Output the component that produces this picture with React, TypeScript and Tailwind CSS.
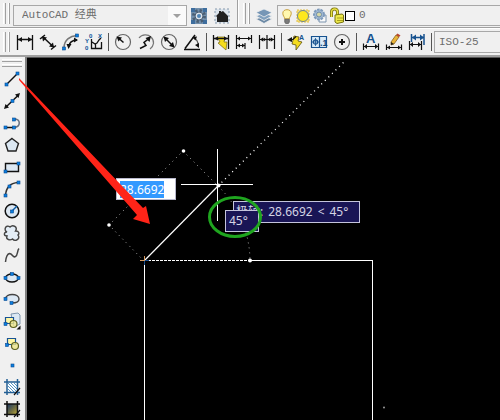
import React, { useEffect, useRef } from 'react';

interface Tool {
  label: string;
  icon: React.ReactNode;
}

interface IconProps {
  children: React.ReactNode;
}

const Icon: React.FC<IconProps> = ({ children }) => (
  <svg className="w-[18px] h-[18px] shrink-0 overflow-visible" viewBox="0 0 18 18" fill="none" stroke="#111" strokeWidth="1.2">
    {children}
  </svg>
);

// Blue grip square used on most draw icons
const Grip: React.FC<{ x: number; y: number }> = ({ x, y }) => (
  <rect x={x - 1.5} y={y - 1.5} width="3" height="3" fill="#0a7fe0" stroke="#0a4a90" strokeWidth=".6" />
);

const dimGroups: Tool[][] = [
  [
    {
      label: '线性',
      icon: <Icon><path d="M1.500 2v15M16.500 2v15M2 6.500h14" strokeWidth="1.300" /><path d="M2 6.500l4-2.500v5zM16 6.500l-4-2.500v5z" fill="#111" stroke="none" /></Icon>,
    },
    {
      label: '对齐',
      icon: <Icon><path d="M1 6l5-4M12 16.500l5-4M4 4l10.500 10" strokeWidth="1.500" /><path d="M3 3.500l5 1-4 4zM15 14.500l-5-1 4-4z" fill="#111" stroke="none" /></Icon>,
    },
    {
      label: '弧长',
      icon: (
        <Icon>
          <path d="M2 15C2 7 8 3 15 2.500" stroke="#777" strokeWidth="1.500" /><path d="M7 13c0-3 3-6 8-6" strokeWidth="1.500" />
          <path d="M6.500 16l-2-5h5zM16 7l-4-2.500v5z" fill="#111" stroke="none" /><Grip x={2} y={15.500} /><Grip x={15} y={2.500} />
        </Icon>
      ),
    },
    {
      label: '坐标',
      icon: (
        <Icon>
          <path d="M6.500 6v9.500h10V9M7 9l3 2 2-1 2-3 2-2M10.500 11v4" strokeWidth="1.300" />
          <g fill="#0b4f96" stroke="none" fontFamily="Liberation Sans, sans-serif" fontSize="6" fontWeight="bold">
            <text x="0" y="10">Y</text><text x="4" y="5">0</text><text x="13" y="5">X</text><text x="0" y="17">0</text>
          </g>
        </Icon>
      ),
    },
  ],
  [
    {
      label: '半径',
      icon: <Icon><circle cx="9" cy="9" r="7.500" stroke="#666" /><path d="M9.500 9.500L5 5.500" strokeWidth="1.500" /><path d="M2.500 3.500l5.500 1-3.500 4z" fill="#111" stroke="none" /></Icon>,
    },
    {
      label: '折弯',
      icon: <Icon><path d="M2 5c3-4 9-4 12-1 4 4 3 9-1 12" stroke="#777" /><path d="M3 15.500l6-3-2-3 5-4" strokeWidth="1.500" /><path d="M14 3l-1.500 6-4-4z" fill="#111" stroke="none" /></Icon>,
    },
    {
      label: '直径',
      icon: <Icon><circle cx="9" cy="9" r="7.500" stroke="#666" /><path d="M5 5l8 8" strokeWidth="1.500" /><path d="M3.500 3.500l5.500 1.500-4 4zM14.500 14.500L9 13l4-4z" fill="#111" stroke="none" /></Icon>,
    },
    {
      label: '角度',
      icon: <Icon><path d="M1 16.500h16M2 15.500L12 2" strokeWidth="1.500" /><path d="M11 5c3 1 4 4 4.500 8" stroke="#555" /><path d="M9 4l5-.5-1.500 4zM16 15l-4-3 4-2z" fill="#111" stroke="none" /></Icon>,
    },
  ],
  [
    {
      label: '快速标注',
      icon: <Icon><path d="M5 4h8l-1 5h3l-1 8-8-7 2-1z" fill="#f5dc1e" stroke="#746514" strokeWidth=".7" /><path d="M1.500 2v14M16.500 2v14M2 5.500h14" strokeWidth="1.300" /><path d="M2 5.500l4-2v4zM16 5.500l-4-2v4z" fill="#111" stroke="none" /></Icon>,
    },
    {
      label: '基线',
      icon: <Icon><path d="M1.500 2v14M10 10v6M16.500 2v8M2 5.500h14M2 12.500h8" /><path d="M2 5.500l3-2v4zM16 5.500l-3-2v4zM2 12.500l3-2v4zM10 12.500l-3-2v4z" fill="#111" stroke="none" /></Icon>,
    },
    {
      label: '连续',
      icon: <Icon><path d="M1.500 2v14M9 2v14M16.500 2v14M2 6.500h14" /><path d="M2 6.500l3-2v4zM8.500 6.500l-3-2v4zM9.500 6.500l3-2v4zM16 6.500l-3-2v4z" fill="#111" stroke="none" /></Icon>,
    },
  ],
  [
    {
      label: '快速引线',
      icon: (
        <Icon>
          <path d="M7 3l5 1-1 4 4 1-6 8v-5l-4-1z" fill="#f5dc1e" stroke="#5c5010" strokeWidth=".8" />
          <path d="M2 6.500h4l3-3" /><path d="M0 7l5-3v5z" fill="#111" stroke="none" />
          <text x="12" y="7" fill="#17528f" stroke="none" fontFamily="Liberation Sans, sans-serif" fontSize="7" fontWeight="bold">A</text>
        </Icon>
      ),
    },
    {
      label: '公差',
      icon: (
        <Icon>
          <path d="M1.500 3.500h15v11h-15zM9.500 3.500v11" fill="#d8eaf8" stroke="#17528f" /><circle cx="5.500" cy="9" r="2.200" stroke="#17528f" /><path d="M5.500 5v8M2 9h7" stroke="#17528f" strokeWidth=".8" />
          <text x="10" y="12.500" fill="#124479" stroke="none" fontFamily="Liberation Sans, sans-serif" fontSize="9" fontWeight="bold">.1</text>
        </Icon>
      ),
    },
    {
      label: '圆心标记',
      icon: <Icon><circle cx="9" cy="9" r="7.500" stroke="#666" /><path d="M9 6v6M6 9h6" strokeWidth="2" /></Icon>,
    },
  ],
  [
    {
      label: '编辑标注',
      icon: (
        <Icon>
          <path d="M1.500 10.500V17M16.500 10.500V17M2 13.500h14" /><path d="M2 13.500l3-2.500v5zM16 13.500l-3-2.500v5z" fill="#111" stroke="none" />
          <text x="4" y="10" fill="#17528f" stroke="none" fontFamily="Liberation Sans, sans-serif" fontSize="13" fontWeight="bold">A</text>
        </Icon>
      ),
    },
    {
      label: '编辑标注文字',
      icon: (
        <Icon>
          <path d="M1.500 11.500V17M16.500 11.500V17M2 14.500h14" /><path d="M2 14.500l3-2v4zM16 14.500l-3-2v4z" fill="#111" stroke="none" />
          <path d="M6 9l5-7 3 2-5 7-3 1z" fill="#e9b53a" stroke="#7a5210" strokeWidth=".7" /><path d="M11 2l1.500-1.500 3 2L14 4z" fill="#b8462c" stroke="none" /><path d="M6 9v3l3-1" fill="#222" stroke="none" />
        </Icon>
      ),
    },
    {
      label: '标注更新',
      icon: (
        <Icon>
          <path d="M3.500 1v8M16 1v11M4 4.500h12" stroke="#17528f" strokeWidth="1.500" /><path d="M4 4.500l4-3v6zM16 4.500l-4-3v6z" fill="#17528f" stroke="none" />
          <path d="M1.500 8v9M13.500 8v9M2 11.500h11" /><path d="M2 11.500l3-2.500v5zM13 11.500l-3-2.500v5z" fill="#111" stroke="none" />
        </Icon>
      ),
    },
  ],
];

const drawTools: Tool[] = [
  { label: '直线', icon: <Icon><path d="M3.500 14.500L15 3" strokeWidth="1.500" /><Grip x={3.500} y={14.500} /><Grip x={14.500} y={3.500} /></Icon> },
  { label: '构造线', icon: <Icon><path d="M3 15L15.500 3" strokeWidth="1.500" /><path d="M1 17l1.500-5 3.500 3.500zM17 1l-5 1.500 3.500 3.500z" fill="#111" stroke="none" /><Grip x={9.500} y={9} /></Icon> },
  { label: '多段线', icon: <Icon><path d="M2 13.500h9" strokeWidth="1.500" /><path d="M11 13.500c7-.5 7-8.500 0-8.500" stroke="#667080" strokeWidth="1.500" /><Grip x={2.500} y={13.500} /><Grip x={11} y={13.500} /><Grip x={11} y={5.500} /></Icon> },
  { label: '正多边形', icon: <Icon><path d="M9 2.500l6.500 5-2.500 7.500H5L2.500 7.500z" fill="#dce8f3" stroke="#222" strokeWidth="1.400" /></Icon> },
  { label: '矩形', icon: <Icon><path d="M2.500 5.500h13v8h-13z" fill="#dce8f3" strokeWidth="1.400" /><Grip x={2.500} y={13.500} /><Grip x={15.500} y={5.500} /></Icon> },
  { label: '圆弧', icon: <Icon><path d="M2.500 15.500C3 8 7 3 15 2.500" stroke="#333" strokeWidth="1.500" /><Grip x={2.500} y={15.500} /><Grip x={6.500} y={6.500} /><Grip x={15.500} y={2.500} /></Icon> },
  { label: '圆', icon: <Icon><circle cx="9" cy="9" r="6.800" fill="#dce8f3" strokeWidth="1.500" /><path d="M9 9l5-5" stroke="#0a5ca8" strokeWidth="1.500" /><Grip x={9} y={9.500} /></Icon> },
  { label: '修订云线', icon: <Icon><path d="M4 8C0 6 3 0 7 3c3-3 8 0 5.500 4 4 0 4 3 2.500 4 3 4-3 7-5.500 4-3 2-7 0-5.500-3C0 12 1 8 4 8z" fill="#e3edf6" stroke="#444" strokeWidth="1.400" /></Icon> },
  { label: '样条曲线', icon: <Icon><path d="M2.500 16C3 11 4 8 6.500 7.500c3 0 3.500 5 6 3 2.500-1 1.500-6 3.500-8" stroke="#444" strokeWidth="1.500" /></Icon> },
  { label: '椭圆', icon: <Icon><ellipse cx="9" cy="10" rx="6.500" ry="4" fill="#dce8f3" strokeWidth="1.300" /><Grip x={2.500} y={10} /><Grip x={9} y={6} /><Grip x={15.500} y={10} /></Icon> },
  { label: '椭圆弧', icon: <Icon><path d="M2.500 9C2.500 3 16 3 16 9c0 3-4 4-7 4" fill="#dce8f3" stroke="#444" strokeWidth="1.400" /><Grip x={2.500} y={9} /><Grip x={8.500} y={13} /></Icon> },
  {
    label: '插入块',
    icon: <Icon><path d="M8 2l7-1 2 2v9l-6 3z" fill="#dbe8f4" stroke="#66829c" strokeWidth=".8" /><path d="M2.500 5.500h8v6h-8z" fill="#fff7a5" stroke="#185394" /><circle cx="10.500" cy="12" r="3.500" fill="#eee68a" fillOpacity=".8" stroke="#5d601f" /><Grip x={2.500} y={12} /><path d="M17.500 13.500v4h-4z" fill="#111" stroke="none" /></Icon>,
  },
  { label: '创建块', icon: <Icon><path d="M4.500 4.500h8v6h-8z" fill="#fff7a5" stroke="#185394" /><circle cx="12" cy="12" r="3.500" fill="#eee68a" fillOpacity=".8" stroke="#5d601f" /><Grip x={4} y={11} /></Icon> },
  { label: '点', icon: <Icon><Grip x={9.500} y={9.500} /></Icon> },
  {
    label: '图案填充',
    icon: <Icon><path d="M4 4h10v10H4z" fill="#fff" stroke="none" /><path d="M5 5l9 9M5 8l6 6M5 11l3 3M8 5l6 6M11 5l3 3" stroke="#2a7ab8" strokeWidth=".8" /><path d="M4 1v16M14.500 1v16M1 4h16M1 14.500h16" stroke="#235f94" strokeWidth="1.500" /><path d="M11 17l6-7" /></Icon>,
  },
  {
    label: '渐变色',
    icon: (
      <Icon>
        <defs><linearGradient id="hatch" x1="0" x2="1" y1="0" y2="1"><stop stopColor="#163567" /><stop offset=".6" stopColor="#77733f" /><stop offset="1" stopColor="#c3b23c" /></linearGradient></defs>
        <path d="M4 4h10.500v10.500H4z" fill="url(#hatch)" stroke="none" /><path d="M4 1v16M14.500 1v16M1 4h16M1 14.500h16" strokeWidth="1.500" /><path d="M11 17l6-7" />
      </Icon>
    ),
  },
];

const ToolButton: React.FC<{ tool: Tool; className: string }> = ({ tool, className }) => (
  <button type="button" title={tool.label} aria-label={tool.label} className={`flex items-center justify-center shrink-0 hover:bg-[#d5e5f5] ${className}`}>
    {tool.icon}
  </button>
);

const VerticalGripper: React.FC = () => (
  <div className="flex gap-[2px] w-[7px] mx-[3px] py-[3px] self-stretch shrink-0">
    <div className="w-[3px] border-l border-r border-l-white border-r-[#a0a0a0]" />
    <div className="w-[3px] border-l border-r border-l-white border-r-[#a0a0a0]" />
  </div>
);

const LayerIcons: React.FC = () => (
  <>
    <svg className="w-[15px] h-[18px] shrink-0" viewBox="0 0 16 18" fill="none">
      <path d="M5 12c0-2-2-3-2-6 0-5 9-5 9 0 0 3-2 4-2 6z" fill="#fff8b0" stroke="#c49a32" /><path d="M5 12.500h5v3l-1 1.500H6l-1-1.500z" fill="#7a7a7a" stroke="#444" strokeWidth=".6" />
    </svg>
    <svg className="w-4 h-[18px] shrink-0" viewBox="0 0 16 18" fill="none">
      <path d="M2 3h12v12H2z" fill="#f3de7e" stroke="#e2bf45" strokeDasharray="2 1" /><circle cx="8" cy="9" r="5.500" fill="#ffe81c" stroke="#6d8397" />
    </svg>
    <svg className="w-[18px] h-[18px] shrink-0" viewBox="0 0 18 18" fill="none">
      <path d="M8 8h7v7H8z" fill="#fafafa" stroke="#7a93ad" /><circle cx="8" cy="7.500" r="5" fill="#a3bbd5" stroke="#7d9abb" strokeWidth="2" strokeDasharray="2.500 1" /><circle cx="8" cy="7.500" r="2.500" fill="#d5d8a8" stroke="#6b88ab" />
    </svg>
    <svg className="w-4 h-[18px] shrink-0" viewBox="0 0 16 18" fill="none">
      <path d="M2.500 10V5c0-4 6-4 6 0v3" stroke="#80790e" strokeWidth="3" /><path d="M2.500 10V5c0-4 6-4 6 0v3" stroke="#e7df43" strokeWidth="1.300" />
      <path d="M6 8l7-1 1.500 1v7L8 16.500 6 15z" fill="#ede94a" stroke="#77720f" /><path d="M8 11h6M8 13.500h6" stroke="#a9a21f" />
    </svg>
    <div className="w-[10px] h-[10px] border border-black bg-white shrink-0" />
  </>
);

const Drawing: React.FC = () => (
  <svg className="absolute inset-0 w-full h-full" fill="none" stroke="#fff" aria-label="绘图区">
    <g transform="translate(-27 -58)" strokeWidth="1">
      {/* existing rectangle */}
      <path d="M144.500 261v2000M372.500 2260V260.500H250" shapeRendering="crispEdges" />
      <path d="M144 260.500h106" strokeDasharray="3 1" shapeRendering="crispEdges" />
      {/* rubber band and polar tracking ray */}
      <path d="M144 261L218 186" strokeWidth="1.200" />
      <path d="M218 186L346 60" strokeDasharray="1 4" strokeWidth="1.300" />
      {/* dynamic dimension */}
      <path d="M144 261L109 225L183 151L218 186" stroke="#aaa" strokeDasharray="1 4" />
      <path d="M218 186A105 105 0 0 1 250 260" stroke="#aaa" strokeDasharray="1 4" />
      <path d="M181 184.500h72M217.500 149v72" shapeRendering="crispEdges" />
      <g fill="#fff" stroke="none">
        <circle cx="109" cy="225" r="1.800" />
        <circle cx="183.500" cy="151" r="1.800" />
        <circle cx="218.500" cy="185.500" r="2" />
        <circle cx="250" cy="260.500" r="2" />
        <circle cx="384" cy="407.500" r="1" fill="#999" />
      </g>
      <path d="M140 260.500h5M144.500 256v5" stroke="#d79a5e" shapeRendering="crispEdges" />
      <path d="M145 260.500h4M144.500 261v4" stroke="#164b8c" shapeRendering="crispEdges" />
    </g>
  </svg>
);

const App: React.FC = () => {
  const lengthRef = useRef<HTMLInputElement>(null);

  useEffect(() => {
    lengthRef.current?.focus();
    lengthRef.current?.select();
  }, []);

  return (
    <div className="relative min-h-screen flex flex-col overflow-hidden bg-[#f0f0f0] font-['Liberation_Mono','Noto_Sans_CJK_SC',monospace] text-[11px] text-[#6d6d6d]">
      {/* Workspace and layer toolbars */}
      <header className="flex h-7 border-b border-[#a0a0a0]">
        <div className="flex items-center w-[238px] shrink-0 border-r border-[#a0a0a0]">
          <VerticalGripper />
          <div className="relative flex h-[21px] w-[174px] mt-1 border border-[#a8a8a8]">
            <select aria-label="工作空间" className="appearance-none w-full pl-2 pr-5 outline-none">
              <option>AutoCAD 经典</option>
            </select>
            <span className="absolute right-0 inset-y-0 w-[18px] bg-[#fafafa] flex items-center justify-center pointer-events-none">
              <svg className="w-2 h-1" viewBox="0 0 8 4"><path d="M0 0h8L4 4z" fill="#a0a0a0" /></svg>
            </span>
          </div>
          <button type="button" aria-label="工作空间设置" className="ml-1 mt-1">
            <svg className="w-4 h-4" viewBox="0 0 16 16" fill="none">
              <path d="M0 0h16v16H0z" fill="#7391ae" /><path d="M0 0h4v4H0zM12 0h4v4h-4zM0 12h4v4H0zM12 12h4v4h-4z" fill="#3e6e9e" />
              <circle cx="8" cy="8" r="5.500" stroke="#4b5f73" strokeWidth="3" strokeDasharray="2.300 2" /><circle cx="8" cy="8" r="4" fill="#dce3ea" stroke="#4b5f73" /><circle cx="8" cy="8" r="2" fill="#4e85b6" />
            </svg>
          </button>
          <button type="button" aria-label="我的工作空间" className="ml-[7px] mt-1">
            <svg className="w-4 h-4" viewBox="0 0 16 16" fill="none">
              <path d="M1 1h14v14H1z" fill="#dce4ec" stroke="#8699ac" strokeDasharray="2 2" /><path d="M2 8l3-3V3h2v1l2-1 5 5v6H3V9z" fill="#222" />
            </svg>
          </button>
        </div>
        <div className="flex items-center flex-1 min-w-0 border-l border-white pl-[1px]">
          <VerticalGripper />
          <button type="button" aria-label="图层特性管理器" className="mt-1 ml-[2px]">
            <svg className="w-[18px] h-4" viewBox="0 0 18 16" fill="none" stroke="#f0f0f0" strokeWidth=".8">
              <path d="M1 11l8-3 8 3-8 4.500z" fill="#6d8aa6" /><path d="M1 8l8-3 8 3-8 4.500z" fill="#7f9fbd" /><path d="M1 4.500L9 1l8 3.500L9 9z" fill="#7696b6" />
            </svg>
          </button>
          <div className="flex items-center flex-1 min-w-0 h-[21px] mt-1 ml-1 pl-[2px] border border-r-0 border-[#a8a8a8]">
            <LayerIcons />
            <select aria-label="图层" className="appearance-none flex-1 min-w-0 pl-1 outline-none">
              <option>0</option>
            </select>
          </div>
        </div>
      </header>

      {/* Dimension toolbar */}
      <nav aria-label="标注" className="flex items-center h-[29px] border-t border-b-2 border-t-white border-b-[#a0a0a0]">
        <VerticalGripper />
        {dimGroups.map((group, i) => (
          <React.Fragment key={i}>
            {group.map((tool) => (
              <ToolButton key={tool.label} tool={tool} className="w-[23px] h-[23px]" />
            ))}
            <div className="w-[6px] h-[18px] flex justify-center shrink-0">
              <div className="w-px bg-[#555]" />
            </div>
          </React.Fragment>
        ))}
        <select aria-label="标注样式" className="appearance-none flex-1 min-w-0 h-[22px] pl-1 border border-r-0 border-[#a8a8a8] outline-none">
          <option>ISO-25</option>
        </select>
      </nav>

      <main className="flex flex-1">
        {/* Draw toolbar */}
        <nav aria-label="绘图" className="flex flex-col items-center w-[27px] shrink-0 pr-[2px] border-r-2 border-[#808080]">
          <div className="flex flex-col gap-[2px] w-5 h-[11px] pt-[2px] shrink-0">
            <div className="h-[3px] border-t border-b border-t-white border-b-[#a0a0a0]" />
            <div className="h-[3px] border-t border-b border-t-white border-b-[#a0a0a0]" />
          </div>
          {drawTools.map((tool) => (
            <ToolButton key={tool.label} tool={tool} className="w-[22px] h-[22px]" />
          ))}
        </nav>

        {/* Model space */}
        <section className="relative flex-1 overflow-hidden bg-black border-t border-[#555] font-['Noto_Sans','Noto_Sans_CJK_SC',sans-serif] text-xs text-[#d4d4e4]">
          <Drawing />
          <input
            ref={lengthRef}
            aria-label="长度"
            defaultValue="28.6692"
            className="absolute left-[89px] top-[120px] w-[60px] h-[22px] pl-[3px] bg-white border border-[#b8b8cc] text-[#222] outline-none caret-transparent selection:bg-[#3399ff] selection:text-white"
          />
          <div className="absolute left-[206px] top-[143px] w-[127px] h-[22px] pl-[2px] flex gap-[5px] leading-5 whitespace-nowrap bg-[#191555] border border-[#c4c4dc]">
            <span>极轴:</span>
            <span>28.6692</span>
            <span>&lt;</span>
            <span>45°</span>
          </div>
          <div className="absolute left-[198px] top-[152px] w-[34px] h-[22px] pl-[3px] leading-5 bg-[#191555] border border-[#c4c4dc]">45°</div>
        </section>
      </main>

      {/* Callouts over the toolbar and canvas */}
      <svg className="absolute inset-0 w-full h-full pointer-events-none" fill="none">
        <path d="M19 78L143 208L146 206L150 224L133 219L137 215L19 80z" fill="#ff2418" />
        <ellipse cx="235" cy="217" rx="25.500" ry="19.500" stroke="#1fa51f" strokeWidth="3" />
      </svg>
    </div>
  );
};

export default App;
